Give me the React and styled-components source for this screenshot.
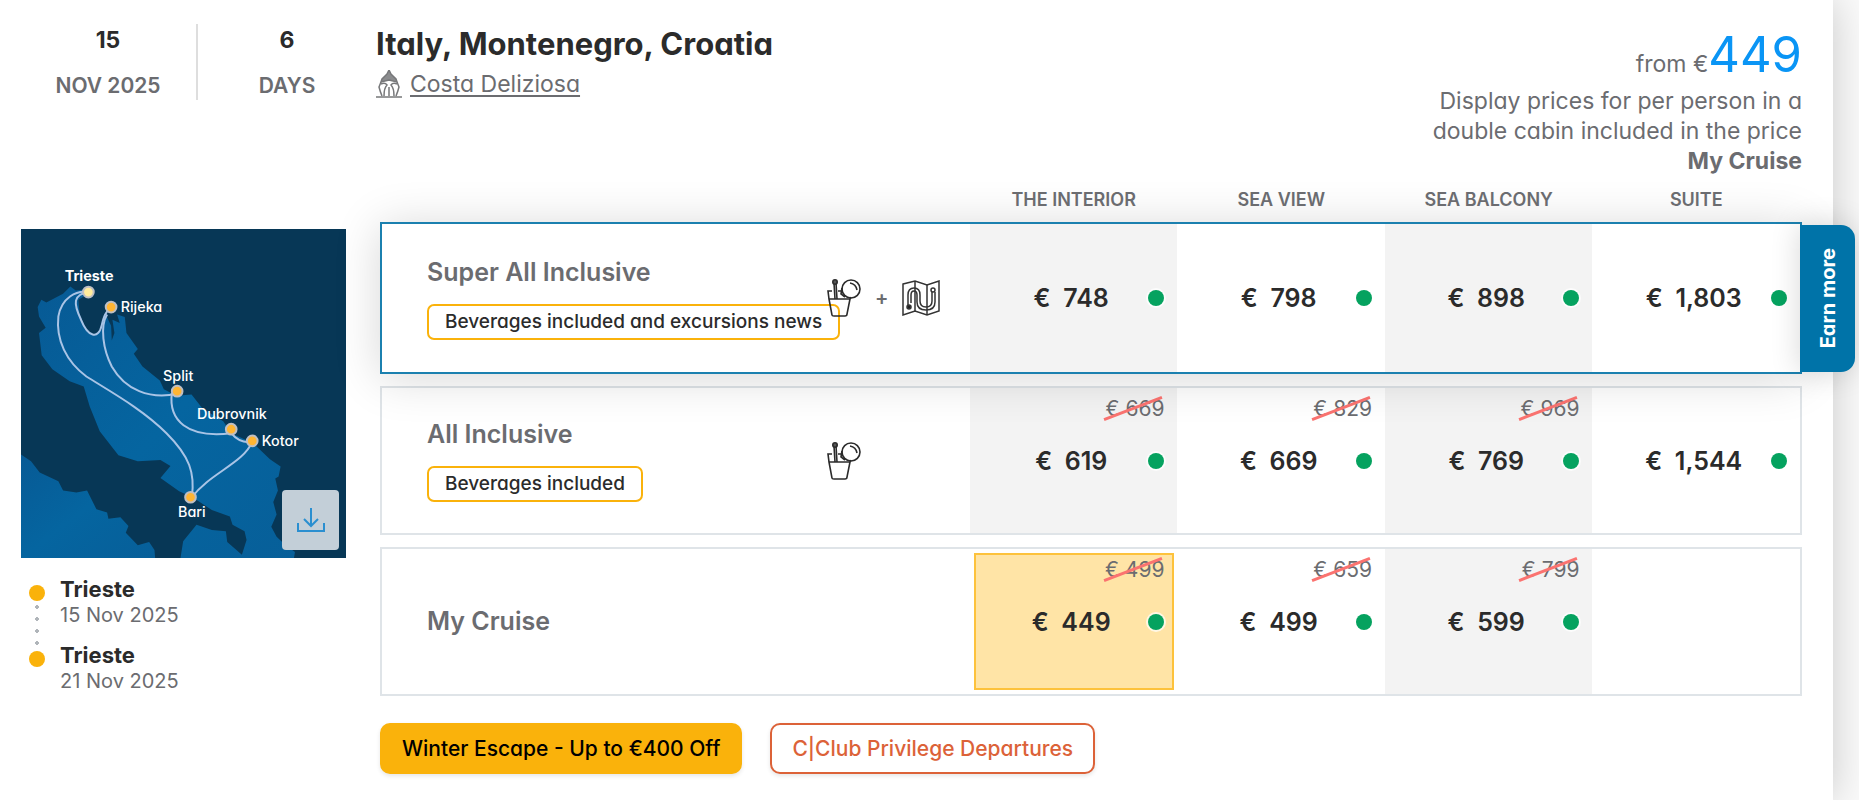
import React from "react";
import styled, { createGlobalStyle, css } from "styled-components";

const color = {
  ink: "#2b2b2b",
  grey: "#6b6c70",
  blue: "#0073a8",
  rowBlue: "#1b80af",
  sky: "#0a95f5",
  amber: "#fab20b",
  orange: "#dc6238",
  green: "#05a25f",
  line: "#dfe4e8",
  shade: "#f3f3f3",
};

const GlobalStyle = createGlobalStyle`
  *, *::before, *::after { box-sizing: border-box; }
  body {
    margin: 0;
    background: #fafafa;
    color: ${color.grey};
    font-family: Inter, "Liberation Sans", sans-serif;
    font-feature-settings: "cv11";
    overflow-x: hidden;
  }
  h2, h3, p, ol { margin: 0; padding: 0; }
`;

const Card = styled.article`
  min-height: 100vh;
  margin-right: 26px;
  padding: 0 31px 26px 20px;
  background: #fff;
  box-shadow: 0 0 40px rgba(0, 0, 0, 0.2);
`;

const Header = styled.header`
  display: flex;
  align-items: flex-start;
  height: 178px;
  padding-top: 24px;
`;

const Fact = styled.div`
  display: flex;
  flex: 0 0 178px;
  flex-direction: column;
  gap: 14px;
  height: 76px;
  text-align: center;
  font-weight: 600;
  font-size: 21px;
  line-height: 32px;
  border-right: ${(p) => (p.$divided ? "2px solid #dedede" : "0")};
`;

const FactValue = styled.strong`
  color: ${color.ink};
  font-weight: 700;
  font-size: 23px;
`;

const Heading = styled.div`
  flex: 1;
`;

const Title = styled.h2`
  color: ${color.ink};
  font-weight: 700;
  font-size: 31px;
  line-height: 40px;
`;

const Ship = styled.div`
  display: flex;
  align-items: center;
  gap: 8px;
  height: 40px;
`;

const ShipLink = styled.a`
  color: ${color.grey};
  font-size: 23px;
  line-height: 30px;
  text-decoration: underline;
  text-decoration-thickness: 2px;
  text-underline-offset: 3px;
`;

const Offer = styled.div`
  width: 380px;
  text-align: right;
  font-size: 23px;
  line-height: 30px;
`;

const OfferPrice = styled.p`
  height: 62px;
  padding-top: 4px;
  line-height: 54px;
`;

const OfferAmount = styled.span`
  color: ${color.sky};
  font-size: 49px;
`;

const Body = styled.div`
  display: grid;
  grid-template-columns: 325px minmax(0, 1fr);
  column-gap: 34px;
  padding-left: 1px;
`;

const Aside = styled.aside`
  padding-top: 51px;
`;

const MapBox = styled.div`
  position: relative;
  height: 329px;

  > svg { display: block; width: 100%; height: 100%; }
`;

const DownloadButton = styled.button`
  position: absolute;
  right: 7px;
  bottom: 8px;
  display: grid;
  place-items: center;
  width: 57px;
  height: 60px;
  padding: 0;
  border: 0;
  border-radius: 4px;
  background: #c3cfd8;
`;

const Stops = styled.ol`
  padding-top: 18px;
  list-style: none;
`;

const Stop = styled.li`
  position: relative;
  height: 66px;
  padding-left: 39px;
  font-size: 20px;
  line-height: 26px;

  &::before {
    content: "";
    position: absolute;
    z-index: 1;
    top: 9px;
    left: 8px;
    width: 16px;
    height: 16px;
    border-radius: 50%;
    background: ${color.amber};
  }

  &:not(:last-child)::after {
    content: "";
    position: absolute;
    top: 25px;
    left: 14px;
    width: 4px;
    height: 50px;
    background: radial-gradient(circle, #b0b5ba 2px, transparent 2px) 0 0 / 4px 12px;
  }
`;

const StopName = styled.strong`
  display: block;
  color: ${color.ink};
  font-weight: 700;
  font-size: 22px;
`;

const Table = styled.table`
  display: flex;
  flex-direction: column;
`;

const gridRow = css`
  display: grid;
  grid-template-columns: minmax(0, 17fr) repeat(4, minmax(0, 6fr));
`;

const Head = styled.thead`
  position: relative;
  z-index: 2;
`;

const HeadRow = styled.tr`
  ${gridRow}
  padding: 0 2px;
`;

const HeadCell = styled.th`
  padding: 0;
  font-weight: 600;
  font-size: 18px;
  line-height: 44px;
`;

const Rows = styled.tbody`
  display: flex;
  flex-direction: column;
  gap: 12px;
`;

const Row = styled.tr`
  ${gridRow}
  position: relative;
  min-height: 149px;
  border: 2px solid ${color.line};

  ${(p) =>
    p.$featured &&
    css`
      z-index: 1;
      min-height: 152px;
      border-color: ${color.rowBlue};
      background: #fff;
      box-shadow: 0 4px 44px rgba(0, 0, 0, 0.16);
    `}
`;

const Package = styled.th`
  display: grid;
  grid-template-columns: minmax(0, 1fr) 143px;
  align-items: center;
  padding: 0 0 0 45px;
  font-weight: 600;
  text-align: left;
`;

const PackageText = styled.div`
  display: flex;
  flex-direction: column;
  align-items: flex-start;
  gap: 16px;
`;

const PackageName = styled.h3`
  font-weight: 600;
  font-size: 25px;
  line-height: 31px;
`;

const Badge = styled.span`
  padding: 0 16px;
  border: 2px solid ${color.amber};
  border-radius: 7px;
  color: ${color.ink};
  font-weight: 500;
  font-size: 19px;
  line-height: 32px;
  white-space: nowrap;
`;

const Perks = styled.div`
  display: flex;
  align-items: center;
  gap: 14px;
  z-index: 1;
  font-size: 20px;
`;

const Cell = styled.td`
  position: relative;
  display: grid;
  grid-template-columns: minmax(0, 1fr) auto;
  grid-template-rows: 1fr auto 1fr;
  align-items: center;
  padding: 0 13px 0 24px;
  background: ${(p) => (p.$shaded ? color.shade : "transparent")};
`;

const BestCell = styled(Cell)`
  margin: 4px 3px 4px 4px;
  padding: 0 10px 0 20px;
  background: #ffe4a6;
  box-shadow: inset 0 0 0 2px #fdc23c;
`;

const Price = styled.strong`
  grid-area: 2 / 1;
  color: ${color.ink};
  font-weight: 600;
  font-size: 25px;
  line-height: 30px;
  text-align: center;
  white-space: pre;
`;

const Dot = styled.span`
  grid-area: 2 / 2;
  width: 16px;
  height: 16px;
  border-radius: 50%;
  background: ${color.green};
  box-shadow: 0 0 0 2px rgba(255, 255, 255, 0.7);
`;

const OldPrice = styled.s`
  grid-area: 1 / 1 / 2 / 3;
  align-self: start;
  justify-self: end;
  position: relative;
  padding-top: ${(p) => (p.$best ? "4px" : "8px")};
  font-size: 21px;
  line-height: 26px;
  text-decoration: none;

  &::after {
    content: "";
    position: absolute;
    right: 0;
    bottom: 12px;
    width: 62px;
    height: 3px;
    background: #fb7370;
    transform: rotate(-21deg);
  }
`;

const EarnButton = styled.button`
  position: absolute;
  top: 1px;
  bottom: 0;
  left: 100%;
  width: 55px;
  padding: 0;
  border: 0;
  border-radius: 0 14px 14px 0;
  background: ${color.blue};
  box-shadow: 0 0 30px rgba(0, 0, 0, 0.16);
  color: #fff;
  font: inherit;
  font-weight: 700;
  font-size: 20px;
  writing-mode: sideways-lr;
`;

const Promos = styled.div`
  display: flex;
  gap: 28px;
  padding-top: 27px;
`;

const PromoButton = styled.button`
  height: 51px;
  padding: 0 20px;
  border: 2px solid ${(p) => (p.$solid ? color.amber : color.orange)};
  border-radius: 10px;
  background: ${(p) => (p.$solid ? color.amber : "#fff")};
  box-shadow: 0 2px 4px rgba(0, 0, 0, 0.1);
  color: ${(p) => (p.$solid ? "#000" : color.orange)};
  font: inherit;
  font-weight: 500;
  font-size: 21px;
`;

function ShipIcon() {
  return (
    <svg width="26" height="28" viewBox="0 0 26 28" fill="none" stroke="#77787a" strokeWidth="1.5" aria-hidden="true">
      <path d="M13 0 L15 4 L17 6 L20 9 L21 12 L13 10 L5 12 L6 9 L9 6 L11 4 Z" fill="#8b8c8e" />
      <path d="M5 12 L3 17 Q4 21 6 26 M21 12 L23 17 Q22 21 20 26" />
      <path d="M5 14 Q9 12 11 15 Q8 18 8 26 M21 14 Q17 12 15 15 Q18 18 18 26 M13 17 V26 M0 27 H26" />
    </svg>
  );
}

function DrinkIcon() {
  return (
    <svg width="34" height="38" viewBox="0 0 34 38" fill="none" stroke="#2b2b2b" strokeWidth="1.6" aria-hidden="true">
      <path d="M2 20 L5 36 Q5 37 7 37 L18 37 Q20 37 20 35 L23 20 Z M2 20 L1 12 H5 M11 12 H15" />
      <path d="M23 20 L24 18 M7 4 L8 20 M9 4 L10 20" />
      <circle cx="8" cy="3" r="2.2" fill="#555" />
      <circle cx="24" cy="10" r="9" />
      <path d="M23 4 Q29 5 30 11" />
      <path d="M15 9 L14 15 L18 18" />
    </svg>
  );
}

function MapIcon() {
  return (
    <svg width="38" height="36" viewBox="0 0 38 36" fill="none" stroke="#333" strokeWidth="1.5" aria-hidden="true">
      <path d="M1 4 L13 1 L25 5 L37 1 V31 L25 35 L13 31 L1 35 Z" />
      <path d="M13 1 V31 M25 5 V35" />
      <path d="M6 26 V15 Q6 8 12 8 Q18 8 18 15 V21 Q18 27 24 27 Q30 27 30 21 V12 M9 23 V15 Q9 11 12 11 Q15 11 15 15 V22 Q15 30 24 30 Q33 30 33 22 V12" />
      <circle cx="7" cy="27" r="2" fill="#222" />
      <circle cx="31" cy="10" r="2" />
    </svg>
  );
}

function DownloadIcon() {
  return (
    <svg width="30" height="26" viewBox="0 0 30 26" fill="none" stroke="#2a8fd0" strokeWidth="2" aria-hidden="true">
      <path d="M15 1 V18 M8 12 L15 19 L22 12 M2 16 V24 H28 V16" />
    </svg>
  );
}

const PORTS = [
  { name: "Trieste", x: 236, y: 217, tx: 238, ty: 184, bold: true },
  { name: "Rijeka", x: 304, y: 262, tx: 395, ty: 276 },
  { name: "Split", x: 502, y: 514, tx: 505, ty: 484 },
  { name: "Dubrovnik", x: 664, y: 628, tx: 666, ty: 596 },
  { name: "Kotor", x: 727, y: 663, tx: 811, ty: 678 },
  { name: "Bari", x: 542, y: 832, tx: 546, ty: 892 },
];

const MapLabel = styled.text`
  fill: #fff;
  font-size: 43px;
  font-weight: ${(p) => (p.$bold ? 700 : 500)};
  text-anchor: middle;
`;

function RouteMap() {
  return (
    <svg viewBox="34 28 974 986" preserveAspectRatio="none" role="img" aria-label="Cruise route map">
      <defs>
        <linearGradient id="sea" x1="0" y1="0" x2="1" y2="1">
          <stop offset="0" stopColor="#075a95" />
          <stop offset="0.5" stopColor="#0565a0" />
          <stop offset="1" stopColor="#075f99" />
        </linearGradient>
      </defs>
      <rect x="34" y="28" width="974" height="986" fill="#073756" />
      <path
        fill="url(#sea)"
        d="M84 262 L95 240 L110 248 L160 222 L182 200 L198 212 L240 208 L226 228 L206 240 L210 285 L230 330 L252 346 L276 330 L288 284 L304 318 L306 362 L314 340 L308 300 L330 310 L322 284 L345 292 L350 340 L384 388 L372 402 L398 440 L450 482 L462 508 L500 528 L545 524 L578 566 L640 604 L664 640 L730 670 L780 718 L812 740 L806 770 L796 776 L804 812 L790 846 L800 884 L784 920 L800 950 L826 975 L855 996 L852 1014 L512 1014 L520 964 L560 914 L606 930 L648 934 L652 966 L696 1004 L710 960 L704 934 L668 914 L660 890 L606 870 L548 832 L508 814 L452 774 L482 738 L452 720 L384 724 L326 706 L270 634 L240 560 L222 500 L180 484 L128 448 L96 406 L88 340 L108 324 L88 290 Z"
      />
      <path
        fill="url(#sea)"
        d="M34 704 L64 724 L90 758 L146 784 L160 812 L200 818 L232 812 L260 868 L292 878 L296 896 L332 892 L356 918 L348 938 L384 976 L418 966 L434 990 L436 1014 L34 1014 Z"
      />
      <g fill="none" stroke="#a9c4e6" strokeWidth="6">
        <path d="M236 217 C200 210 155 235 146 290 C138 360 170 425 230 470 C310 520 400 570 470 640 C540 710 556 760 546 832" />
        <path d="M236 217 C190 225 190 250 214 300 C234 350 266 362 276 316 C282 290 286 278 304 262" />
        <path d="M292 284 C270 320 280 390 306 440 C346 510 420 540 502 522" />
        <path d="M486 520 C476 600 530 656 664 640 C680 660 700 670 727 666" />
        <path d="M727 666 C700 730 600 760 546 832" />
      </g>
      {PORTS.map((p) => (
        <g key={p.name}>
          <circle cx={p.x} cy={p.y} r="16" fill={p.bold ? "#ffec9c" : "#ffb533"} stroke="#bfbfc4" strokeWidth="6" />
          <MapLabel x={p.tx} y={p.ty} $bold={p.bold}>
            {p.name}
          </MapLabel>
        </g>
      ))}
    </svg>
  );
}

const CABINS = ["THE INTERIOR", "SEA VIEW", "SEA BALCONY", "SUITE"];

const PACKAGES = [
  {
    name: "Super All Inclusive",
    badge: "Beverages included and excursions news",
    drinks: true,
    tours: true,
    featured: true,
    prices: [{ now: "748" }, { now: "798" }, { now: "898" }, { now: "1,803" }],
  },
  {
    name: "All Inclusive",
    badge: "Beverages included",
    drinks: true,
    prices: [{ now: "619", old: "669" }, { now: "669", old: "829" }, { now: "769", old: "969" }, { now: "1,544" }],
  },
  {
    name: "My Cruise",
    prices: [{ now: "449", old: "499", best: true }, { now: "499", old: "659" }, { now: "599", old: "799" }, {}],
  },
];

function PriceCell({ price, index, earn }) {
  const Box = price.best ? BestCell : Cell;
  return (
    <Box $shaded={index % 2 === 0}>
      {price.old && <OldPrice $best={price.best}>€ {price.old}</OldPrice>}
      {price.now && <Price>{"€  " + price.now}</Price>}
      {price.now && <Dot />}
      {earn && <EarnButton type="button">Earn more</EarnButton>}
    </Box>
  );
}

export default function App() {
  return (
    <>
      <GlobalStyle />
      <Card>
        <Header>
          <Fact $divided>
            <FactValue>15</FactValue>
            <span>NOV 2025</span>
          </Fact>
          <Fact>
            <FactValue>6</FactValue>
            <span>DAYS</span>
          </Fact>
          <Heading>
            <Title>Italy, Montenegro, Croatia</Title>
            <Ship>
              <ShipIcon />
              <ShipLink href="#ship">Costa Deliziosa</ShipLink>
            </Ship>
          </Heading>
          <Offer>
            <OfferPrice>
              from €<OfferAmount>449</OfferAmount>
            </OfferPrice>
            <p>
              Display prices for per person in a double cabin included in the price <b>My Cruise</b>
            </p>
          </Offer>
        </Header>

        <Body>
          <Aside>
            <MapBox>
              <RouteMap />
              <DownloadButton type="button" aria-label="Download map">
                <DownloadIcon />
              </DownloadButton>
            </MapBox>
            <Stops>
              <Stop>
                <StopName>Trieste</StopName>15 Nov 2025
              </Stop>
              <Stop>
                <StopName>Trieste</StopName>21 Nov 2025
              </Stop>
            </Stops>
          </Aside>

          <main>
            <Table>
              <Head>
                <HeadRow>
                  <td />
                  {CABINS.map((c) => (
                    <HeadCell key={c} scope="col">
                      {c}
                    </HeadCell>
                  ))}
                </HeadRow>
              </Head>
              <Rows>
                {PACKAGES.map((p) => (
                  <Row key={p.name} $featured={p.featured}>
                    <Package scope="row">
                      <PackageText>
                        <PackageName>{p.name}</PackageName>
                        {p.badge && <Badge>{p.badge}</Badge>}
                      </PackageText>
                      <Perks>
                        {p.drinks && <DrinkIcon />}
                        {p.tours && <span>+</span>}
                        {p.tours && <MapIcon />}
                      </Perks>
                    </Package>
                    {p.prices.map((price, i) => (
                      <PriceCell key={i} price={price} index={i} earn={p.featured && i === 3} />
                    ))}
                  </Row>
                ))}
              </Rows>
            </Table>
            <Promos>
              <PromoButton type="button" $solid>
                Winter Escape - Up to €400 Off
              </PromoButton>
              <PromoButton type="button">C|Club Privilege Departures</PromoButton>
            </Promos>
          </main>
        </Body>
      </Card>
    </>
  );
}
